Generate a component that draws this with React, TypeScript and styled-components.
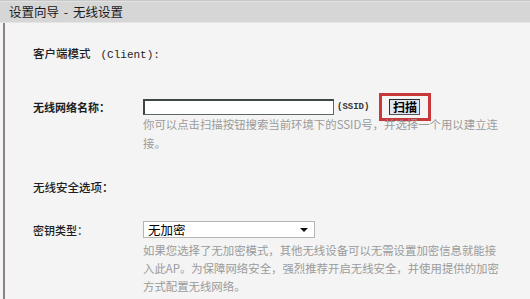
import React from 'react'
import styled, { createGlobalStyle } from 'styled-components';

const GlobalStyle = createGlobalStyle`
    html, body {
        margin: 0;
        padding: 0;
        background: #f4f4f4;
    }
    body {
        font-family: "Noto Sans CJK SC", "Noto Sans", sans-serif;
        color: #222;
    }
`;

const Page = styled.div`
    width: 530px;
    height: 299px;
    overflow: hidden;
    display: flex;
    flex-direction: column;
`;
const Header = styled.div`
    height: 23px;
    box-sizing: border-box;
    background: #d6d6d6;
    border-top: 1px solid #c9c9c9;
    box-shadow: inset 0 1px 0 #e1e1e1;
    border-bottom: 1px solid #e4e4e4;
    padding-left: 9px;
    font-size: 12.5px;
    line-height: 21px;
    color: #1a1a1a;
    word-spacing: 2px;
`;
const Body = styled.div`
    flex: 1;
    margin-left: 3px;
    border-left: 2px solid #8d8481;
    padding: 22px 0 0 28px;
    display: flex;
    flex-direction: column;
`;
const SectionTitle = styled.div<{ $top?: number }>`
    font-size: 11.5px;
    line-height: 16px;
    margin-top: ${p => p.$top ?? 0}px;
    color: #1e1e1e;
    font-weight: 500;
`;
const Latin = styled.span`
    font-family: "Liberation Mono", monospace;
    font-size: 11px;
    font-weight: 400;
    margin-left: 10px;
`;
const FieldRow = styled.div<{ $top: number }>`
    display: flex;
    align-items: center;
    margin-top: ${p => p.$top}px;
`;
const Label = styled.div<{ $bold?: boolean }>`
    width: 110px;
    font-size: 11px;
    line-height: 16px;
    font-weight: ${p => (p.$bold ? 700 : 500)};
    color: #1e1e1e;
`;
const TextInput = styled.input`
    width: 191px;
    height: 16px;
    box-sizing: border-box;
    margin: 0;
    padding: 0 2px;
    background: #fff;
    border: 1px solid #5c6662;
    border-top-width: 2px;
    border-left-width: 2px;
    border-top-color: #3e4744;
    border-left-color: #3e4744;
    outline: none;
`;
const Suffix = styled.span`
    margin-left: 3px;
    font-family: "Liberation Mono", monospace;
    font-size: 9px;
    font-weight: 700;
    color: #333;
`;
const ScanFrame = styled.div`
    margin: -6px 0 -6px 10px;
    padding: 3px 8px 3px 7px;
    border: 3px solid #c8383a;
    display: flex;
`;
const ScanButton = styled.button`
    width: 31px;
    height: 16px;
    box-sizing: border-box;
    margin: 0;
    padding: 0;
    background: #dfe6ee;
    border: 1px solid #2a2a2a;
    border-right-color: #555;
    border-bottom-color: #555;
    font-family: "Noto Sans CJK SC", sans-serif;
    font-size: 12px;
    font-weight: 700;
    line-height: 14px;
    color: #000;
`;
const Hint = styled.div<{ $top: number; $line: number }>`
    margin: ${p => p.$top}px 0 0 110px;
    font-size: 11.4px;
    line-height: ${p => p.$line}px;
    color: #9b9b9b;
    white-space: nowrap;
`;
const SelectBox = styled.div`
    position: relative;
    width: 172px;
    height: 17px;
    box-sizing: border-box;
    background: #fff;
    border: 1px solid #b4b4b4;
    display: flex;
    align-items: center;
    padding-left: 4px;
    font-size: 12.5px;
    color: #000;
`;
const Caret = styled.span`
    position: absolute;
    right: 6px;
    top: 6px;
    width: 0;
    height: 0;
    border-left: 4px solid transparent;
    border-right: 4px solid transparent;
    border-top: 4px solid #111;
`;

const App = () => {
    return (
        <>
            <GlobalStyle />
            <Page>
                <Header>设置向导 - 无线设置</Header>
                <Body>
                    <SectionTitle>
                        客户端模式<Latin>(Client):</Latin>
                    </SectionTitle>
                    <FieldRow $top={36}>
                        <Label $bold>无线网络名称：</Label>
                        <TextInput type="text" />
                        <Suffix>(SSID)</Suffix>
                        <ScanFrame>
                            <ScanButton>扫描</ScanButton>
                        </ScanFrame>
                    </FieldRow>
                    <Hint $top={0} $line={19}>
                        你可以点击扫描按钮搜索当前环境下的SSID号，并选择一个用以建立连<br />
                        接。
                    </Hint>
                    <SectionTitle $top={26}>无线安全选项：</SectionTitle>
                    <FieldRow $top={26}>
                        <Label>密钥类型：</Label>
                        <SelectBox>
                            无加密
                            <Caret />
                        </SelectBox>
                    </FieldRow>
                    <Hint $top={3} $line={18}>
                        如果您选择了无加密模式，其他无线设备可以无需设置加密信息就能接<br />
                        入此AP。为保障网络安全，强烈推荐开启无线安全，并使用提供的加密<br />
                        方式配置无线网络。
                    </Hint>
                </Body>
            </Page>
        </>
    );
}

export default App;
